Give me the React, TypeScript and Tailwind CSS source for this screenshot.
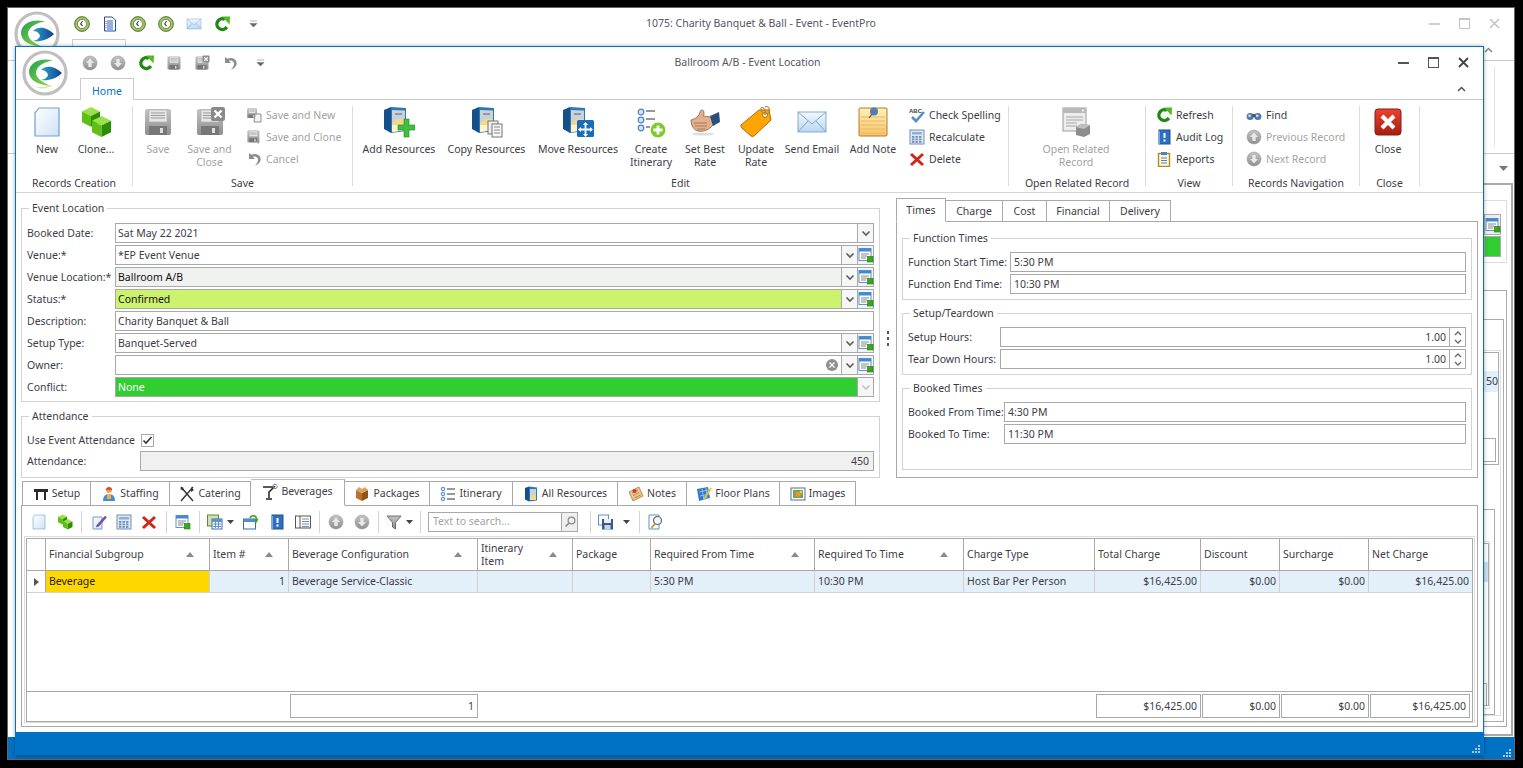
import React from "react";

type P = { s?: number };
const Svg = ({ s = 16, v = 16, children }: { s?: number; v?: number; children: React.ReactNode }) => (
  <svg width={s} height={s} viewBox={`0 0 ${v} ${v}`} className="shrink-0 block">{children}</svg>
);

const Defs = () => (
  <svg className="absolute w-0 h-0">
    <defs>
      <linearGradient id="paper" x1="0" y1="0" x2="1" y2="1"><stop offset="0" stopColor="#ffffff" /><stop offset="1" stopColor="#cfe2f7" /></linearGradient>
      <linearGradient id="gray" x1="0" y1="0" x2="0" y2="1"><stop offset="0" stopColor="#c4c4c4" /><stop offset="1" stopColor="#8e8e8e" /></linearGradient>
      <linearGradient id="note" x1="0" y1="0" x2="0" y2="1"><stop offset="0" stopColor="#fff0b8" /><stop offset="1" stopColor="#f6c46a" /></linearGradient>
      <linearGradient id="red" x1="0" y1="0" x2="0" y2="1"><stop offset="0" stopColor="#e8452c" /><stop offset="1" stopColor="#a81d10" /></linearGradient>
      <linearGradient id="logoG" x1="0" y1="0" x2="1" y2="1"><stop offset="0" stopColor="#1aa050" /><stop offset="1" stopColor="#a6da4a" /></linearGradient>
      <linearGradient id="logoB" x1="0" y1="0" x2="1" y2="0"><stop offset="0" stopColor="#2aa5c9" /><stop offset="1" stopColor="#123f92" /></linearGradient>
      <linearGradient id="env" x1="0" y1="0" x2="0" y2="1"><stop offset="0" stopColor="#f2f8ff" /><stop offset="1" stopColor="#b9d8f4" /></linearGradient>
    </defs>
  </svg>
);

const Logo = () => (
  <svg width={46} height={46} viewBox="0 0 46 46" className="block">
    <circle cx="23" cy="23" r="21" fill="#fff" stroke="#bfbfbf" strokeWidth="3.2" />
    <path d="M31 10.5 C18 7 7 13 7 22 C7 30 16 35 29 36 C20 32 14 28 14 23 C14 17 21 12 31 10.5Z" fill="url(#logoG)" />
    <path d="M19 20 C25 14 34 17 40 23 C34 29 26 31 19 30 C24 29 27 26 25.5 23.5 C24 21 22 20 19 20Z" fill="url(#logoB)" />
    <path d="M14 37 C20 40 27 38 31 35.5 C25 37 20 37 14 37Z" fill="#d5ebb0" />
  </svg>
);

const Cube = ({ x, y, w }: { x: number; y: number; w: number }) => (
  <g>
    <polygon points={`${x},${y + w * 0.25} ${x + w * 0.5},${y} ${x + w},${y + w * 0.25} ${x + w * 0.5},${y + w * 0.5}`} fill="#9ce04a" />
    <polygon points={`${x},${y + w * 0.25} ${x + w * 0.5},${y + w * 0.5} ${x + w * 0.5},${y + w * 1.1} ${x},${y + w * 0.85}`} fill="#5fbf14" />
    <polygon points={`${x + w},${y + w * 0.25} ${x + w * 0.5},${y + w * 0.5} ${x + w * 0.5},${y + w * 1.1} ${x + w},${y + w * 0.85}`} fill="#2e8d06" />
  </g>
);
const Clone = ({ s = 32 }: P) => <Svg s={s} v={32}><Cube x={2} y={1} w={18} /><Cube x={12} y={10} w={19} /></Svg>;
const NewDoc = ({ s = 32 }: P) => (
  <Svg s={s} v={32}><path d="M8 2 H28 V30 H4 V7 Z" fill="url(#paper)" stroke="#6f9fd8" strokeWidth="1.2" /></Svg>
);
const FloppyShape = ({ c = "url(#gray)", dark = "#777" }: { c?: string; dark?: string }) => (
  <g>
    <rect x="3" y="3" width="26" height="26" rx="2" fill={c} />
    <rect x="7" y="4" width="18" height="12" fill="#e6e6e6" stroke="#aaa" strokeWidth=".6" />
    <path d="M9 7H23M9 9.5H23M9 12H23" stroke="#9a9a9a" strokeWidth="1" />
    <rect x="7" y="20" width="18" height="9" fill={dark} />
    <rect x="18" y="22" width="3" height="5" fill="#ddd" />
  </g>
);
const Save = ({ s = 32 }: P) => <Svg s={s} v={32}><FloppyShape /></Svg>;
const SaveClose = ({ s = 32 }: P) => (
  <Svg s={s} v={32}>
    <FloppyShape />
    <rect x="17" y="1" width="14" height="14" rx="2" fill="#8a8a8a" />
    <path d="M20.5 4.5l7 7M27.5 4.5l-7 7" stroke="#fff" strokeWidth="2.4" />
  </Svg>
);
const Undo = ({ c = "#8d8d8d" }: { c?: string }) => (
  <Svg><path d="M3 2 L3 8 L9 8 L6.8 5.8 C10 4.8 12.5 7 12 9.5 C11.6 11.5 10.5 13 9 14.5 C13 13.5 15 10.5 14.6 7.5 C14 3.6 9.5 2 5.5 3.8 Z" fill={c} /></Svg>
);
const SaveNew = () => (
  <Svg>
    <g transform="scale(.38)"><FloppyShape /></g>
    <path d="M9 7 H15 V15 H8 Z" fill="#f4f4f4" stroke="#8d8d8d" />
  </Svg>
);
const SaveClone = () => (
  <Svg>
    <g transform="translate(0 0) scale(.46)"><FloppyShape /></g>
    <path d="M10 12h4l-2 3z M11 9h2v3h-2z" fill="#9a9a9a" />
  </Svg>
);
const Cabinet = () => (
  <g>
    <polygon points="1,4 8,1 8,27 1,23" fill="#14508a" />
    <polygon points="8,1 23,2 23,25 8,27" fill="#2f78b5" />
    <polygon points="9,4 22,4.5 22,24 9,26" fill="#c9d2da" />
    <rect x="12" y="7" width="7" height="2" fill="#8d99a5" />
    <path d="M9 17 L15 13 H22 V24 L9 26 Z" fill="#f3d98b" />
    <path d="M9 19h13v5l-13 2z" fill="#fff3c8" />
  </g>
);
const AddRes = () => (
  <Svg s={32} v={32}>
    <Cabinet />
    <path d="M21 13h5v6h6v5h-6v7h-5v-7h-6v-5h6z" fill="#3fbf3f" stroke="#1c8a1c" strokeWidth=".6" />
  </Svg>
);
const CopyRes = () => (
  <Svg s={32} v={32}>
    <Cabinet />
    <rect x="17" y="15" width="10" height="13" fill="#ececec" stroke="#777" />
    <rect x="21" y="18" width="10" height="13" fill="#f7f7f7" stroke="#777" />
    <path d="M23 21h6M23 24h6M23 27h6" stroke="#888" />
  </Svg>
);
const MoveRes = () => (
  <Svg s={32} v={32}>
    <Cabinet />
    <rect x="15" y="14" width="17" height="17" rx="1.5" fill="#1a6cb8" />
    <path d="M23.5 16l2.5 3h-1.6v3.6H28V21l3 2.5-3 2.5v-1.6h-3.6V28H26l-2.5 3-2.5-3h1.6v-3.6H19V26l-3-2.5L19 21v1.6h3.6V19H21z" fill="#fff" />
  </Svg>
);
const Itin = () => (
  <Svg s={32} v={32}>
    {[6, 14, 22].map((y) => <circle key={y} cx="6" cy={y} r="2.8" fill="#cfe2f7" stroke="#4d86c8" strokeWidth="1.2" />)}
    <path d="M11 5h9M11 13h9M11 21h4" stroke="#333" strokeWidth="1.2" />
    <circle cx="23" cy="24" r="7.4" fill="#7ccb2a" />
    <path d="M23 19.5v9M18.5 24h9" stroke="#fff" strokeWidth="2.8" />
  </Svg>
);
const Thumb = () => (
  <Svg s={32} v={32}>
    <path d="M2 14 C5 13 8 12 10 9 C11 7 11 4 13 4 C15 4 15.5 7 14.5 10 L22 11 L24 19 C20 24 14 26 9 25 C5 24 2 20 2 14Z" fill="#e2b08c" stroke="#8a5d42" strokeWidth=".8" />
    <path d="M5 17h13M6 20h12M8 23h8" stroke="#a87555" strokeWidth=".9" />
    <path d="M21 10 L30 6 L31 16 L24 20 Z" fill="#2b4d80" />
    <ellipse cx="14" cy="28" rx="11" ry="1.6" fill="#dfdfdf" />
  </Svg>
);
const Tag = () => (
  <Svg s={32} v={32}>
    <path d="M1 19 L19 4 L29 4 L31 14 L14 30 Q12 31 11 30 L2 22 Q0 20 1 19Z" fill="#ffa500" stroke="#a86d08" />
    <circle cx="25" cy="9" r="2.4" fill="#fff" stroke="#a86d08" />
    <path d="M25 9 C27 2 20 -1 21 4 C22 7 26 10 29 6 C31 3 27 -1 25 1" fill="none" stroke="#b58a4a" strokeWidth="1.2" />
  </Svg>
);
const Env = ({ s = 32 }: P) => (
  <Svg s={s} v={32}>
    <rect x="2" y="6" width="28" height="20" fill="url(#env)" stroke="#88aacc" />
    <path d="M2 6 L16 18 L30 6 M2 26 L12 15 M30 26 L20 15" fill="none" stroke="#7fa6cc" />
  </Svg>
);
const Note = () => (
  <Svg s={32} v={32}>
    <rect x="2" y="2" width="28" height="28" rx="1" fill="url(#note)" stroke="#b47a20" />
    <path d="M4 11h24M4 15h24M4 19h24M4 23h24M4 27h24" stroke="#e8b050" strokeWidth=".8" />
    <circle cx="17" cy="5.5" r="4" fill="#4d7fb5" />
    <path d="M15 8 L12 12" stroke="#555" strokeWidth="1.2" />
  </Svg>
);
const Spell = () => (
  <Svg>
    <text x="0" y="6" fontSize="6" fontWeight="700" fill="#444" fontFamily="Liberation Sans, sans-serif">ABC</text>
    <path d="M3 10 L7 14 L15 5" fill="none" stroke="#5b8fc4" strokeWidth="2.6" />
  </Svg>
);
const Calc = () => (
  <Svg>
    <rect x="1" y="1" width="14" height="14" fill="#dfe9f5" stroke="#6f8fb5" />
    <rect x="3" y="3" width="10" height="2.5" fill="#8fb0d6" />
    {[7, 9.5, 12].map((y) => [3, 6.5, 10].map((x) => <rect key={`${x}${y}`} x={x} y={y} width="2.4" height="1.8" fill="#7090b5" />))}
  </Svg>
);
const Del = () => (
  <Svg><path d="M2 3 L14 14 M14 3 L2 14" stroke="#d22418" strokeWidth="3" /></Svg>
);
const Related = () => (
  <Svg s={32} v={32}>
    <rect x="3" y="2" width="23" height="23" fill="#ededed" stroke="#9a9a9a" />
    <rect x="3" y="2" width="23" height="5" fill="#b9b9b9" />
    <circle cx="23" cy="4.5" r="1" fill="#fff" />
    <path d="M6 11h17M6 14h17M6 17h11M6 20h11" stroke="#a5a5a5" />
    <polygon points="16,21 21,18 30,19 30,28 24,31 16,29" fill="#8d8d8d" />
    <polygon points="16,21 24,23 30,19 21,18" fill="#c0c0c0" />
  </Svg>
);
const Refresh = ({ s = 16 }: P) => (
  <Svg s={s}>
    <path d="M11 3.4 A5.4 5.4 0 1 0 12.8 11" fill="none" stroke="#1f8a12" strokeWidth="3.4" />
    <path d="M8 0.5 L16 0.5 L15.5 8.5 Z" fill="#4dbb22" />
  </Svg>
);
const Audit = () => (
  <Svg>
    <rect x="3" y="1" width="11" height="14" fill="#2f6fc0" stroke="#1e4e90" />
    <rect x="2" y="2" width="2" height="13" fill="#7fa9dc" />
    <path d="M8.5 4v5" stroke="#fff" strokeWidth="2" /><rect x="7.5" y="10.5" width="2" height="2" fill="#fff" />
  </Svg>
);
const Reports = () => (
  <Svg>
    <rect x="2.5" y="2.5" width="11" height="13" fill="#fff7d8" stroke="#b58a20" strokeWidth="1.4" />
    <rect x="5" y="1" width="6" height="3" fill="#4c83c2" />
    <path d="M5 7h6M5 9.5h6M5 12h6" stroke="#4c83c2" />
  </Svg>
);
const Find = () => (
  <Svg>
    <circle cx="4.2" cy="9.5" r="3.6" fill="#4e78b0" /><circle cx="11.8" cy="9.5" r="3.6" fill="#4e78b0" />
    <circle cx="3.6" cy="8.8" r="1.4" fill="#cde" /><circle cx="11.2" cy="8.8" r="1.4" fill="#cde" />
    <rect x="6.5" y="7" width="3" height="3" fill="#555" />
  </Svg>
);
const Circ = ({ up, c = "url(#gray)" }: { up?: boolean; c?: string }) => (
  <Svg>
    <circle cx="8" cy="8" r="7" fill={c} stroke="#9a9a9a" strokeWidth=".6" />
    <g transform={up ? "" : "rotate(180 8 8)"}>
      <path d="M8 3.6 L12 8 H9.7 V12 H6.3 V8 H4 Z" fill="#e8e8e8" />
    </g>
  </Svg>
);
const CloseBig = () => (
  <Svg s={32} v={32}>
    <rect x="3" y="3" width="26" height="26" rx="3" fill="url(#red)" stroke="#8a1a10" />
    <path d="M10 10 L22 22 M22 10 L10 22" stroke="#fff" strokeWidth="4.2" />
  </Svg>
);
const Form = () => (
  <Svg>
    <rect x="1" y="1.5" width="12" height="12" fill="#fff" stroke="#5d93cc" />
    <rect x="1" y="1.5" width="12" height="3" fill="#3f8ad6" />
    <path d="M3 7h8M3 9h6M3 11h5" stroke="#888" />
    <rect x="9.5" y="9.5" width="5.5" height="5.5" fill="#3aa81e" stroke="#1f7a0d" strokeWidth=".6" />
  </Svg>
);
const Clock = () => (
  <Svg>
    <circle cx="8" cy="8" r="7.4" fill="#9cc36a" stroke="#5b7a32" />
    <circle cx="8" cy="8" r="4.6" fill="#fff" stroke="#76934c" />
    <path d="M8.6 5 L6.6 8 L8.6 10" fill="none" stroke="#444" strokeWidth="1.1" />
  </Svg>
);
const DocBlue = () => (
  <Svg>
    <path d="M2.5 1 H10 L13.5 4 V15 H2.5 Z" fill="#fff" stroke="#1d4fa0" />
    <path d="M5 5h6M5 7h6M5 9h6M5 11h6M5 13h6" stroke="#2a60c0" />
    <path d="M4 5v8" stroke="#e03020" strokeDasharray="1 1" />
  </Svg>
);
const QatDrop = () => (
  <svg width="9" height="8" viewBox="0 0 9 8" className="block shrink-0"><path d="M1 1h7M1 3.5h7l-3.5 3.5z" fill="#666" stroke="#666" strokeWidth=".5" /></svg>
);

const Chev = ({ light }: { light?: boolean }) => (
  <svg width="10" height="7" viewBox="0 0 10 7" className="block"><path d="M1.5 1.5 L5 5 L8.5 1.5" fill="none" stroke={light ? "#c4c4c4" : "#5f5f5f"} strokeWidth="1.7" /></svg>
);
const Caret = () => <svg width="7" height="4" viewBox="0 0 7 4" className="block shrink-0"><path d="M0 0h7L3.5 4z" fill="#444" /></svg>;
const Up = () => <svg width="8" height="5" viewBox="0 0 8 5" className="block shrink-0"><path d="M4 0L8 5H0z" fill="#8a8a8a" /></svg>;
const Grip = () => (
  <svg width="9" height="9" viewBox="0 0 9 9" className="block">
    {[[6, 0], [3, 3], [6, 3], [0, 6], [3, 6], [6, 6]].map(([x, y]) => <rect key={`${x}${y}`} x={x} y={y} width="2" height="2" fill="#a9c8e8" />)}
  </svg>
);

/* ---- ribbon ---- */
const Big = ({ w, icon, lines, off }: { w: string; icon: React.ReactNode; lines: string[]; off?: boolean }) => (
  <div className={`${w} shrink-0 flex flex-col items-center`}>
    <div className="h-[32px]">{icon}</div>
    <div className={`mt-[5px] text-center leading-[13px] whitespace-nowrap ${off ? "text-[#a3a3a3]" : ""}`}>
      {lines.map((l) => <div key={l}>{l}</div>)}
    </div>
  </div>
);
const Small = ({ icon, text, off }: { icon: React.ReactNode; text: string; off?: boolean }) => (
  <div className={`h-[22px] flex items-center gap-[4px] whitespace-nowrap ${off ? "text-[#a3a3a3]" : ""}`}>{icon}<span className="pt-[1px]">{text}</span></div>
);
const Group = ({ w, label, children }: { w: string; label: string; children: React.ReactNode }) => (
  <div className={`${w} shrink-0 mt-[6px] h-[80px] border-r border-[#dcdcdc] flex flex-col`}>
    <div className="h-[70px] shrink-0 flex">{children}</div>
    <div className="h-[14px] shrink-0 leading-[14px] text-center whitespace-nowrap">{label}</div>
  </div>
);
const Col = ({ pl, children }: { pl: string; children: React.ReactNode }) => (
  <div className={`${pl} -mt-[2px] flex flex-col`}>{children}</div>
);

/* ---- form ---- */
const Drop = ({ light }: { light?: boolean }) => (
  <div className="w-[16px] h-full shrink-0 border-l border-[#a9a9a9] bg-[#f6f6f6] flex items-center justify-center"><Chev light={light} /></div>
);
const Pick = () => (
  <div className="w-[16px] h-full shrink-0 border-l border-[#a9a9a9] bg-[#f3f3f3] flex items-center justify-center"><Form /></div>
);
const Field = ({ label, value, bg = "bg-white", color = "text-[#3d3d48]", drop, pick, clear, lightDrop }: {
  label: string; value: string; bg?: string; color?: string; drop?: boolean; pick?: boolean; clear?: boolean; lightDrop?: boolean;
}) => (
  <div className="h-[20px] flex items-center">
    <div className="w-[88px] shrink-0 pt-[1px] whitespace-nowrap">{label}</div>
    <div className={`flex-1 h-full border border-[#a9a9a9] flex items-center ${bg}`}>
      <div className={`flex-1 pl-[2px] pt-[1px] whitespace-nowrap ${color}`}>{value}</div>
      {clear && (
        <svg width="12" height="12" viewBox="0 0 12 12" className="mr-[3px]"><circle cx="6" cy="6" r="6" fill="#8f8f8f" /><path d="M3.5 3.5l5 5M8.5 3.5l-5 5" stroke="#fff" strokeWidth="1.3" /></svg>
      )}
      {drop && <Drop light={lightDrop} />}
      {pick && <Pick />}
    </div>
  </div>
);
const Box = ({ title, children, className }: { title: string; children: React.ReactNode; className: string }) => (
  <fieldset className={`border border-[#d2d2d2] ${className}`}>
    <legend className="ml-[2px] px-[3px] h-[14px] leading-[14px] whitespace-nowrap">{title}</legend>
    {children}
  </fieldset>
);
const TimeRow = ({ label, value, w }: { label: string; value: string; w: string }) => (
  <div className="h-[20px] flex items-center">
    <div className={`${w} shrink-0 pt-[1px] whitespace-nowrap`}>{label}</div>
    <div className="flex-1 h-full border border-[#a9a9a9] pl-[3px] leading-[19px] text-[#3d3d48]">{value}</div>
  </div>
);
const SpinRow = ({ label }: { label: string }) => (
  <div className="h-[20px] flex items-center">
    <div className="w-[92px] shrink-0 pt-[1px] whitespace-nowrap">{label}</div>
    <div className="flex-1 h-full border border-[#a9a9a9] flex items-center">
      <div className="flex-1 text-right pr-[3px] pt-[1px]">1.00</div>
      <div className="w-[16px] h-full border-l border-[#a9a9a9] flex flex-col items-center justify-center gap-[3px]">
        <svg width="8" height="5" viewBox="0 0 8 5" className="block"><path d="M1 4 L4 1 L7 4" fill="none" stroke="#666" strokeWidth="1.3" /></svg>
        <svg width="8" height="5" viewBox="0 0 8 5" className="block"><path d="M1 1 L4 4 L7 1" fill="none" stroke="#666" strokeWidth="1.3" /></svg>
      </div>
    </div>
  </div>
);

/* ---- tab icons ---- */
const TSetup = () => (
  <Svg><path d="M1 3 H15 V6 H13 V14 H11 V6 H5 V14 H3 V6 H1 Z" fill="#2a2a2a" /></Svg>
);
const TStaff = () => (
  <Svg>
    <circle cx="8" cy="4" r="3" fill="#e8a070" /><path d="M5 3 Q8 -1 11 3 L11 4 H5Z" fill="#d9521e" />
    <path d="M2 15 Q2 8 8 8 Q14 8 14 15Z" fill="#3f8fd8" /><path d="M6 8h4v5H6z" fill="#f0b040" />
  </Svg>
);
const TCater = () => (
  <Svg><path d="M2 1 L14 15 M14 1 L2 15" stroke="#333" strokeWidth="1.4" /><path d="M12 1 L15 4 L12 6z M1 3 L4 1 L5 5z" fill="#333" /></Svg>
);
const TBev = () => (
  <Svg><path d="M1 3 H12 L7 8 V14 M4 15 H10" fill="none" stroke="#222" strokeWidth="1.5" /><circle cx="13" cy="2.5" r="2.2" fill="none" stroke="#888" /></Svg>
);
const TPack = () => (
  <Svg>
    <polygon points="2,4 8,7 8,15 2,12" fill="#b8732a" /><polygon points="14,4 8,7 8,15 14,12" fill="#8f5518" />
    <polygon points="2,4 5,1 8,3 11,1 14,4 8,7" fill="#dba35a" />
  </Svg>
);
const TItin = () => (
  <Svg>
    {[3, 8, 13].map((y) => <circle key={y} cx="3" cy={y} r="1.8" fill="#dbe8f7" stroke="#4d86c8" />)}
    <path d="M7 3h8M7 8h8M7 13h8" stroke="#333" />
  </Svg>
);
const TAll = () => (
  <Svg>
    <polygon points="2,2 6,0.5 6,15.5 2,13.5" fill="#14508a" /><polygon points="6,0.5 14,1.5 14,14.5 6,15.5" fill="#2f78b5" />
    <rect x="7" y="3" width="6" height="11" fill="#c9d2da" /><rect x="7" y="9" width="6" height="5" fill="#f3d98b" />
  </Svg>
);
const TNotes = () => (
  <Svg>
    <polygon points="1,6 11,1 15,10 5,15" fill="#eec48a" stroke="#9a7038" strokeWidth=".7" />
    <path d="M4 7 L10 4 M5 9.5 L11 6.5 M6.5 12 L12.5 9" stroke="#b88a4e" /><circle cx="6.5" cy="5" r="2" fill="#c83a2a" />
  </Svg>
);
const TFloor = () => (
  <Svg>
    <polygon points="1,3 12,1 14,12 3,15" fill="#2e7ac8" /><path d="M3 6 L12 4 M4 10 L13 8 M6 3 L8 14 M10 2 L11 13" stroke="#bcd9f5" strokeWidth=".7" />
    <path d="M15 2 L8 13" stroke="#f0c030" strokeWidth="1.8" />
  </Svg>
);
const TImg = () => (
  <Svg>
    <rect x="1" y="2" width="14" height="12" fill="#fff" stroke="#4d6fa5" /><rect x="3" y="4" width="10" height="8" fill="#7ea050" />
    <circle cx="8" cy="8" r="2.6" fill="#e09a30" /><circle cx="11" cy="6" r="1.2" fill="#f2d060" />
  </Svg>
);
const tabs: { n: string; w: string; i: React.ReactNode; sel?: boolean }[] = [
  { n: "Setup", w: "w-[69px]", i: <TSetup /> },
  { n: "Staffing", w: "w-[79px]", i: <TStaff /> },
  { n: "Catering", w: "w-[81px]", i: <TCater /> },
  { n: "Beverages", w: "w-[94px]", i: <TBev />, sel: true },
  { n: "Packages", w: "w-[85px]", i: <TPack /> },
  { n: "Itinerary", w: "w-[83px]", i: <TItin /> },
  { n: "All Resources", w: "w-[105px]", i: <TAll /> },
  { n: "Notes", w: "w-[69px]", i: <TNotes /> },
  { n: "Floor Plans", w: "w-[93px]", i: <TFloor /> },
  { n: "Images", w: "w-[76px]", i: <TImg /> },
];

/* ---- toolbar ---- */
const Sep = () => <div className="w-px h-[22px] bg-[#d4d4d4] shrink-0" />;
const TB = ({ w, children }: { w: string; children: React.ReactNode }) => (
  <div className={`${w} shrink-0 flex items-center justify-center gap-[4px]`}>{children}</div>
);
const Edit = () => (
  <Svg><path d="M2 3 H11 V15 H2 Z" fill="url(#paper)" stroke="#6f9fd8" /><path d="M6 11 L14 2 L15.5 3.5 L8 12 L5 13 Z" fill="#7a4fb0" stroke="#4a2f80" strokeWidth=".4" /></Svg>
);
const Cols = () => (
  <Svg>
    <rect x="0.5" y="1" width="11" height="11" fill="#cfe0b0" stroke="#5f8a32" />
    <rect x="5" y="5" width="10" height="10" fill="#fff" stroke="#3c6fb0" />
    <rect x="5" y="5" width="10" height="3" fill="#5d93cc" /><path d="M6 10h8M6 12.5h8M8.5 8v6M11.5 8v6" stroke="#5d93cc" />
  </Svg>
);
const WinArrow = () => (
  <Svg>
    <rect x="0.5" y="5" width="12" height="10" fill="#fff" stroke="#2f6fb5" /><rect x="0.5" y="5" width="12" height="3" fill="#4d8fd0" />
    <path d="M7 4 C8 1 12 1 13.5 4 L13 7" fill="none" stroke="#3fa020" strokeWidth="1.6" /><path d="M11 5.5 L15.5 5 L13.5 9Z" fill="#3fa020" />
  </Svg>
);
const Panel = () => (
  <Svg><rect x="0.5" y="2" width="15" height="12" fill="#fff" stroke="#555" /><path d="M5 2v12" stroke="#555" /><path d="M7 5h7M7 7.5h7M7 10h7M7 12.5h7" stroke="#6f8fb5" /></Svg>
);
const Funnel = () => (
  <Svg><path d="M1 2 H15 L9.5 8.5 V15 L6.5 13 V8.5 Z" fill="url(#gray)" stroke="#555" strokeWidth=".8" /></Svg>
);
const SaveBlue = () => (
  <Svg>
    <rect x="0.5" y="1" width="10" height="10" fill="#fff" stroke="#5d93cc" />
    <rect x="4" y="5" width="11" height="10.5" fill="#3a5a88" /><rect x="6" y="5" width="7" height="4" fill="#e8eef6" /><rect x="6.5" y="11" width="6" height="4.5" fill="#c9d6e8" />
  </Svg>
);
const DocSearch = () => (
  <Svg>
    <path d="M1 1 H11 V15 H1 Z" fill="#fff" stroke="#5d93cc" />
    <circle cx="9.5" cy="6.5" r="4" fill="#eef5fb" stroke="#666" strokeWidth="1.2" /><path d="M7 9.5 L3.5 14" stroke="#c8923a" strokeWidth="1.8" />
  </Svg>
);

const GRID = "grid grid-cols-[19px_164px_79px_189px_95px_78px_164px_149px_131px_106px_79px_89px_103px]";
const heads: [string[], boolean][] = [
  [["Financial Subgroup"], true], [["Item #"], true], [["Beverage Configuration"], true], [["Itinerary", "Item"], true],
  [["Package"], false], [["Required From Time"], true], [["Required To Time"], true], [["Charge Type"], false],
  [["Total Charge"], false], [["Discount"], false], [["Surcharge"], false], [["Net Charge"], false],
];
const row: [string, boolean][] = [
  ["1", true], ["Beverage Service-Classic", false], ["", false], ["", false], ["5:30 PM", false], ["10:30 PM", false],
  ["Host Bar Per Person", false], ["$16,425.00", true], ["$0.00", true], ["$0.00", true], ["$16,425.00", true],
];
const peek: string[] = [
  "left-[1470px] top-[183px] w-[43px] h-[553px] border-[#aaa] border-y-2 border-r-2",
  "left-[1470px] top-[200px] w-[37px] h-[63px] border-[#ddd] border",
  "left-[1470px] top-[290px] w-[37px] h-[437px] border-[#aaa] border",
  "left-[1470px] top-[319px] w-[34px] h-[403px] border-[#aaa] border",
  "left-[1470px] top-[350px] w-[31px] h-[366px] border-[#ddd] border",
  "left-[1470px] top-[352px] w-[29px] h-[113px] border-[#aaa] border",
  "left-[1470px] top-[438px] w-[26px] h-[24px] border-[#aaa] border",
  "left-[1470px] top-[509px] w-[25px] h-[206px] border-[#aaa] border",
  "left-[1470px] top-[541px] w-[20px] h-[168px] border-[#ddd] border",
  "left-[1470px] top-[543px] w-[19px] h-[163px] border-[#aaa] border",
  "left-[1470px] top-[683px] w-[17px] h-[23px] border-[#aaa] border",
];

export default function App() {
  return (
    <div className="relative w-[1523px] h-[768px] bg-black overflow-hidden text-[10.5px] text-[#3d3d48] [font-family:'Noto_Sans',sans-serif]">
      <Defs />
      {/* background window */}
      <div className="absolute left-[7px] top-[7px] w-[1508px] h-[753px] bg-white border border-[#666] flex flex-col">
        <div className="h-[31px] flex items-center pl-[66px] pr-[14px] shrink-0">
          <div className="flex items-center gap-[12px] w-[250px]">
            <Clock /><DocBlue /><Clock /><Clock />
            <div className="w-[16px]"><Env s={16} /></div><Refresh />
            <div className="ml-[7px]"><QatDrop /></div>
          </div>
          <div className="flex-1 text-center text-[#555564] pr-[52px]">1075: Charity Banquet &amp; Ball - Event - EventPro</div>
          <div className="w-[250px] flex items-center justify-end gap-[19px] text-[#c4c4c4]">
            <div className="w-[11px] h-[2px] bg-[#cfcfcf]" />
            <div className="w-[11px] h-[11px] border border-[#c4c4c4] border-t-2" />
            <svg width="11" height="11" viewBox="0 0 11 11" className="block"><path d="M1 1l9 9M10 1l-9 9" stroke="#c4c4c4" strokeWidth="1.6" /></svg>
          </div>
        </div>
        <div className="h-[22px] shrink-0 border-b border-[#ccc] pl-[64px]">
          <div className="w-[54px] h-[22px] border border-[#ccc]" />
        </div>
        <div className="mt-auto h-[22px] shrink-0 bg-[#0072c6] flex items-end justify-end pr-[2px] pb-[1px]"><Grip /></div>
      </div>
      <div className="absolute left-[8px] top-[153px] w-[1506px] h-px bg-[#ccc]" />
      <div className="absolute left-[1484px] top-[43px] w-[30px] flex justify-start pl-[0px]"><svg width="9" height="6" viewBox="0 0 9 6" className="ml-[0px] mt-[4px] block"><path d="M1 5 L4.5 1.5 L8 5" fill="none" stroke="#888" strokeWidth="1.5" /></svg></div>
      <div className="absolute left-[1494px] top-[67px] w-px h-[80px] bg-[#e4e4e4]" />
      <svg width="9" height="5" viewBox="0 0 9 5" className="absolute left-[1499px] top-[166px]"><path d="M0 0h9L4.5 5z" fill="#777" /></svg>
      {peek.map((c) => <div key={c} className={`absolute ${c}`} />)}
      <div className="absolute left-[1484px] top-[371px] w-[14px] h-[21px] bg-[#e3eff9] text-right leading-[21px]">50</div>
      <div className="absolute left-[1484px] top-[562px] w-[4px] h-[20px] bg-[#cfe0ef]" />
      <div className="absolute left-[1484px] top-[214px] w-[17px] h-[21px] bg-[#eee] border border-[#aaa] flex items-center justify-center"><Form /></div>
      <div className="absolute left-[1484px] top-[236px] w-[17px] h-[21px] bg-[#32cd32] border border-[#aaa]" />
      <div className="absolute left-[14px] top-[11px]"><Logo /></div>

      {/* event location window */}
      <div className="absolute left-[15px] top-[46px] w-[1469px] h-[711px] bg-white border border-[#0072c6] border-b-0 shadow-[0_0_4px_rgba(0,0,0,0.35)] flex flex-col">
        <div className="absolute left-[6px] top-[3px] z-10"><Logo /></div>
        <div className="h-[31px] shrink-0 flex items-center pr-[14px]">
          <div className="w-[250px] pl-[66px] flex items-center gap-[12px]">
            <Circ up /><Circ /><Refresh /><Save s={16} /><SaveClose s={16} /><Undo />
            <div className="ml-[6px]"><QatDrop /></div>
          </div>
          <div className="flex-1 text-center text-[#555564]">Ballroom A/B - Event Location</div>
          <div className="w-[240px] flex items-center justify-end gap-[19px]">
            <div className="w-[11px] h-[2px] bg-[#555]" />
            <div className="w-[11px] h-[11px] border border-[#555] border-t-2" />
            <svg width="11" height="11" viewBox="0 0 11 11" className="block"><path d="M1 1l9 9M10 1l-9 9" stroke="#444" strokeWidth="1.8" /></svg>
          </div>
        </div>
        <div className="h-[22px] shrink-0 border-b border-[#ccc] pl-[64px] flex justify-between pr-[17px]">
          <div className="w-[54px] h-[22px] bg-white border border-[#ccc] border-b-0 text-center leading-[24px] text-[#0072c6]">Home</div>
          <svg width="9" height="6" viewBox="0 0 9 6" className="block mt-[8px]"><path d="M1 5 L4.5 1.5 L8 5" fill="none" stroke="#555" strokeWidth="1.5" /></svg>
        </div>

        {/* ribbon */}
        <div className="h-[93px] shrink-0 border-b border-[#d4d4d4] flex">
          <Group w="w-[117px]" label="Records Creation">
            <div className="pl-[6px] flex">
              <Big w="w-[50px]" icon={<NewDoc />} lines={["New"]} />
              <Big w="w-[48px]" icon={<Clone />} lines={["Clone..."]} />
            </div>
          </Group>
          <Group w="w-[220px]" label="Save">
            <Big w="w-[50px]" icon={<Save />} lines={["Save"]} off />
            <Big w="w-[53px]" icon={<SaveClose />} lines={["Save and", "Close"]} off />
            <Col pl="pl-[10px]">
              <Small icon={<SaveNew />} text="Save and New" off />
              <Small icon={<SaveClone />} text="Save and Clone" off />
              <Small icon={<Undo />} text="Cancel" off />
            </Col>
          </Group>
          <Group w="w-[656px]" label="Edit">
            <Big w="w-[92px]" icon={<AddRes />} lines={["Add Resources"]} />
            <Big w="w-[83px]" icon={<CopyRes />} lines={["Copy Resources"]} />
            <Big w="w-[100px]" icon={<MoveRes />} lines={["Move Resources"]} />
            <Big w="w-[46px]" icon={<Itin />} lines={["Create", "Itinerary"]} />
            <Big w="w-[62px]" icon={<Thumb />} lines={["Set Best", "Rate"]} />
            <Big w="w-[40px]" icon={<Tag />} lines={["Update", "Rate"]} />
            <Big w="w-[72px]" icon={<Env />} lines={["Send Email"]} />
            <Big w="w-[50px]" icon={<Note />} lines={["Add Note"]} />
            <Col pl="pl-[11px]">
              <Small icon={<Spell />} text="Check Spelling" />
              <Small icon={<Calc />} text="Recalculate" />
              <Small icon={<Del />} text="Delete" />
            </Col>
          </Group>
          <Group w="w-[137px]" label="Open Related Record">
            <Big w="w-[134px]" icon={<Related />} lines={["Open Related", "Record"]} off />
          </Group>
          <Group w="w-[87px]" label="View">
            <Col pl="pl-[10px]">
              <Small icon={<Refresh />} text="Refresh" />
              <Small icon={<Audit />} text="Audit Log" />
              <Small icon={<Reports />} text="Reports" />
            </Col>
          </Group>
          <Group w="w-[127px]" label="Records Navigation">
            <Col pl="pl-[13px]">
              <Small icon={<Find />} text="Find" />
              <Small icon={<Circ up />} text="Previous Record" off />
              <Small icon={<Circ />} text="Next Record" off />
            </Col>
          </Group>
          <Group w="w-[60px]" label="Close">
            <Big w="w-[56px]" icon={<CloseBig />} lines={["Close"]} />
          </Group>
        </div>

        {/* form */}
        <div className="h-[286px] shrink-0 flex pl-[5px] pt-[5px]">
          <div className="w-[859px] shrink-0 flex flex-col">
            <div className="h-[3px]" />
            <Box title="Event Location" className="px-[5px] pb-[4px]">
              <div className="pt-[8px] flex flex-col gap-[2px]">
                <Field label="Booked Date:" value="Sat May 22 2021" drop />
                <Field label="Venue:*" value="*EP Event Venue" drop pick />
                <Field label="Venue Location:*" value="Ballroom A/B" bg="bg-[#eff2ee]" color="text-[#111]" drop pick />
                <Field label="Status:*" value="Confirmed" bg="bg-[#ccf26e]" color="text-[#111]" drop pick />
                <Field label="Description:" value="Charity Banquet & Ball" />
                <Field label="Setup Type:" value="Banquet-Served" drop pick />
                <Field label="Owner:" value="" clear drop pick />
                <Field label="Conflict:" value="None" bg="bg-[#32cd32]" color="text-white" drop lightDrop />
              </div>
            </Box>
            <Box title="Attendance" className="mt-[7px] px-[5px] pb-[6px]">
              <div className="pt-[10px] h-[24px] flex items-center gap-[6px]">
                <span className="whitespace-nowrap pt-[1px]">Use Event Attendance</span>
                <div className="w-[13px] h-[13px] border border-[#a9a9a9] flex items-center justify-center">
                  <svg width="11" height="9" viewBox="0 0 11 9" className="block"><path d="M1.5 4.5 L4 7 L9.5 1" fill="none" stroke="#333" strokeWidth="1.6" /></svg>
                </div>
              </div>
              <div className="mt-[4px] h-[20px] flex items-center">
                <div className="w-[113px] shrink-0 pt-[1px]">Attendance:</div>
                <div className="flex-1 h-full border border-[#a9a9a9] bg-[#f0f0f0] text-right pr-[4px] leading-[19px]">450</div>
              </div>
            </Box>
          </div>
          <div className="w-[16px] shrink-0 self-center flex flex-col items-center gap-[3px]">
            {[0, 1, 2].map((i) => <div key={i} className="w-[2px] h-[3px] bg-[#555]" />)}
          </div>
          <div className="w-[582px] shrink-0 flex flex-col h-[280px]">
            <div className="h-[24px] flex items-end -mb-px">
              <div className="w-[50px] h-[24px] z-10 bg-white border border-[#a9a9a9] border-b-white text-center leading-[22px]">Times</div>
              {[["Charge", "w-[57px]"], ["Cost", "w-[44px]"], ["Financial", "w-[63px]"], ["Delivery", "w-[61px]"]].map(([t, w]) => (
                <div key={t} className={`${w} h-[22px] border border-[#a9a9a9] border-l-0 text-center leading-[20px]`}>{t}</div>
              ))}
            </div>
            <div className="flex-1 border border-[#a9a9a9] px-[5px] pt-[9px]">
              <Box title="Function Times" className="px-[5px] pb-[5px]">
                <div className="pt-[7px] flex flex-col gap-[2px]">
                  <TimeRow label="Function Start Time:" value="5:30 PM" w="w-[102px]" />
                  <TimeRow label="Function End Time:" value="10:30 PM" w="w-[102px]" />
                </div>
              </Box>
              <Box title="Setup/Teardown" className="mt-[6px] px-[5px] pb-[5px]">
                <div className="pt-[7px] flex flex-col gap-[2px]">
                  <SpinRow label="Setup Hours:" />
                  <SpinRow label="Tear Down Hours:" />
                </div>
              </Box>
              <Box title="Booked Times" className="mt-[6px] px-[5px] pb-[25px]">
                <div className="pt-[7px] flex flex-col gap-[2px]">
                  <TimeRow label="Booked From Time:" value="4:30 PM" w="w-[96px]" />
                  <TimeRow label="Booked To Time:" value="11:30 PM" w="w-[96px]" />
                </div>
              </Box>
            </div>
          </div>
        </div>

        {/* tabs + grid */}
        <div className="flex pl-[6px] h-[27px] shrink-0 items-end -mb-px">
          {tabs.map((t, i) => (
            <div key={t.n} className={`${t.w} flex items-center justify-center gap-[3px] border border-[#a9a9a9] whitespace-nowrap ${i ? "border-l-0" : ""} ${t.sel ? "h-[27px] pb-[2px] border-b-white bg-white z-10 border-t-[#bdbdbd]" : "h-[25px]"}`}>
              {t.i}<span>{t.n}</span>
            </div>
          ))}
        </div>
        <div className="ml-[5px] w-[1457px] h-[222px] shrink-0 border border-[#a9a9a9] flex flex-col">
          <div className="h-[30px] shrink-0 flex items-center pl-[7px] pt-[1px]">
            <TB w="w-[20px]"><NewDoc s={16} /></TB>
            <TB w="w-[32px]"><Clone s={16} /></TB>
            <Sep />
            <TB w="w-[34px]"><Edit /></TB>
            <TB w="w-[16px]"><Calc /></TB>
            <TB w="w-[34px]"><Del /></TB>
            <Sep />
            <TB w="w-[32px]"><Form /></TB>
            <Sep />
            <TB w="w-[40px]"><Cols /><Caret /></TB>
            <TB w="w-[22px]"><WinArrow /></TB>
            <TB w="w-[30px]"><Audit /></TB>
            <TB w="w-[22px]"><Panel /></TB>
            <div className="w-[5px] shrink-0" />
            <Sep />
            <TB w="w-[32px]"><Circ up /></TB>
            <TB w="w-[20px]"><Circ /></TB>
            <div className="w-[6px] shrink-0" />
            <Sep />
            <TB w="w-[41px]"><Funnel /><Caret /></TB>
            <Sep />
            <div className="ml-[7px] w-[150px] h-[20px] shrink-0 border border-[#a9a9a9] flex items-center">
              <div className="flex-1 pl-[4px] pt-[1px] text-[#a3a3a3]">Text to search...</div>
              <div className="w-[16px] h-full border-l border-[#a9a9a9] bg-[#efefef] flex items-center justify-center">
                <svg width="12" height="12" viewBox="0 0 12 12" className="block"><circle cx="7.5" cy="4.5" r="3.4" fill="none" stroke="#888" strokeWidth="1.2" /><path d="M5 7 L1.5 10.5" stroke="#888" strokeWidth="1.6" /></svg>
              </div>
            </div>
            <div className="w-[12px] shrink-0" />
            <Sep />
            <TB w="w-[30px]"><SaveBlue /></TB>
            <TB w="w-[10px]"><Caret /></TB>
            <div className="w-[8px] shrink-0" />
            <Sep />
            <TB w="w-[32px]"><DocSearch /></TB>
          </div>
          <div className="ml-[2px] mr-[2px] h-[187px] border border-[#dcdcdc] p-px">
            <div className="h-[184px] border border-[#a9a9a9] flex flex-col">
              <div className={`${GRID} h-[32px] shrink-0 border-b border-[#a9a9a9]`}>
                <div className="border-r border-[#a9a9a9]" />
                {heads.map(([l, s], i) => (
                  <div key={i} className={`flex items-center justify-between pl-[3px] leading-[13px] whitespace-nowrap ${i < 11 ? "border-r border-[#a9a9a9]" : ""} ${s ? "pr-[15px]" : ""}`}>
                    <div>{l.map((x) => <div key={x}>{x}</div>)}</div>
                    {s && <Up />}
                  </div>
                ))}
              </div>
              <div className={`${GRID} h-[22px] shrink-0 border-b border-[#d0d0d0] bg-[#e3eff9]`}>
                <div className="bg-white border-r border-[#a9a9a9] flex items-center justify-center">
                  <svg width="5" height="8" viewBox="0 0 5 8" className="block"><path d="M0 0L5 4L0 8z" fill="#555" /></svg>
                </div>
                <div className="bg-[#ffd700] border-r border-[#d0d0d0] pl-[3px] leading-[21px] text-[#222]">Beverage</div>
                {row.map(([v, r], i) => (
                  <div key={i} className={`leading-[21px] whitespace-nowrap pl-[3px] ${r ? "text-right pr-[3px]" : ""} ${i < 10 ? "border-r border-[#d0d0d0]" : ""}`}>{v}</div>
                ))}
              </div>
              <div className="flex-1" />
              <div className={`${GRID} h-[30px] shrink-0 border-t border-[#a9a9a9] pt-[2px] pb-[3px]`}>
                <div /><div /><div />
                <div className="ml-[1px] border border-[#a9a9a9] text-right pr-[3px] leading-[22px]">1</div>
                <div /><div /><div /><div /><div />
                <div className="ml-[1px] border border-[#a9a9a9] text-right pr-[3px] leading-[22px]">$16,425.00</div>
                <div className="ml-[1px] border border-[#a9a9a9] text-right pr-[3px] leading-[22px]">$0.00</div>
                <div className="ml-[1px] border border-[#a9a9a9] text-right pr-[3px] leading-[22px]">$0.00</div>
                <div className="ml-[1px] mr-[2px] border border-[#a9a9a9] text-right pr-[3px] leading-[22px]">$16,425.00</div>
              </div>
            </div>
          </div>
        </div>
        <div className="mt-auto h-[25px] shrink-0 bg-[#0072c6] border-b-2 border-[#005ea3] flex items-end justify-end pr-[2px] pb-[1px]"><Grip /></div>
      </div>
    </div>
  );
}
